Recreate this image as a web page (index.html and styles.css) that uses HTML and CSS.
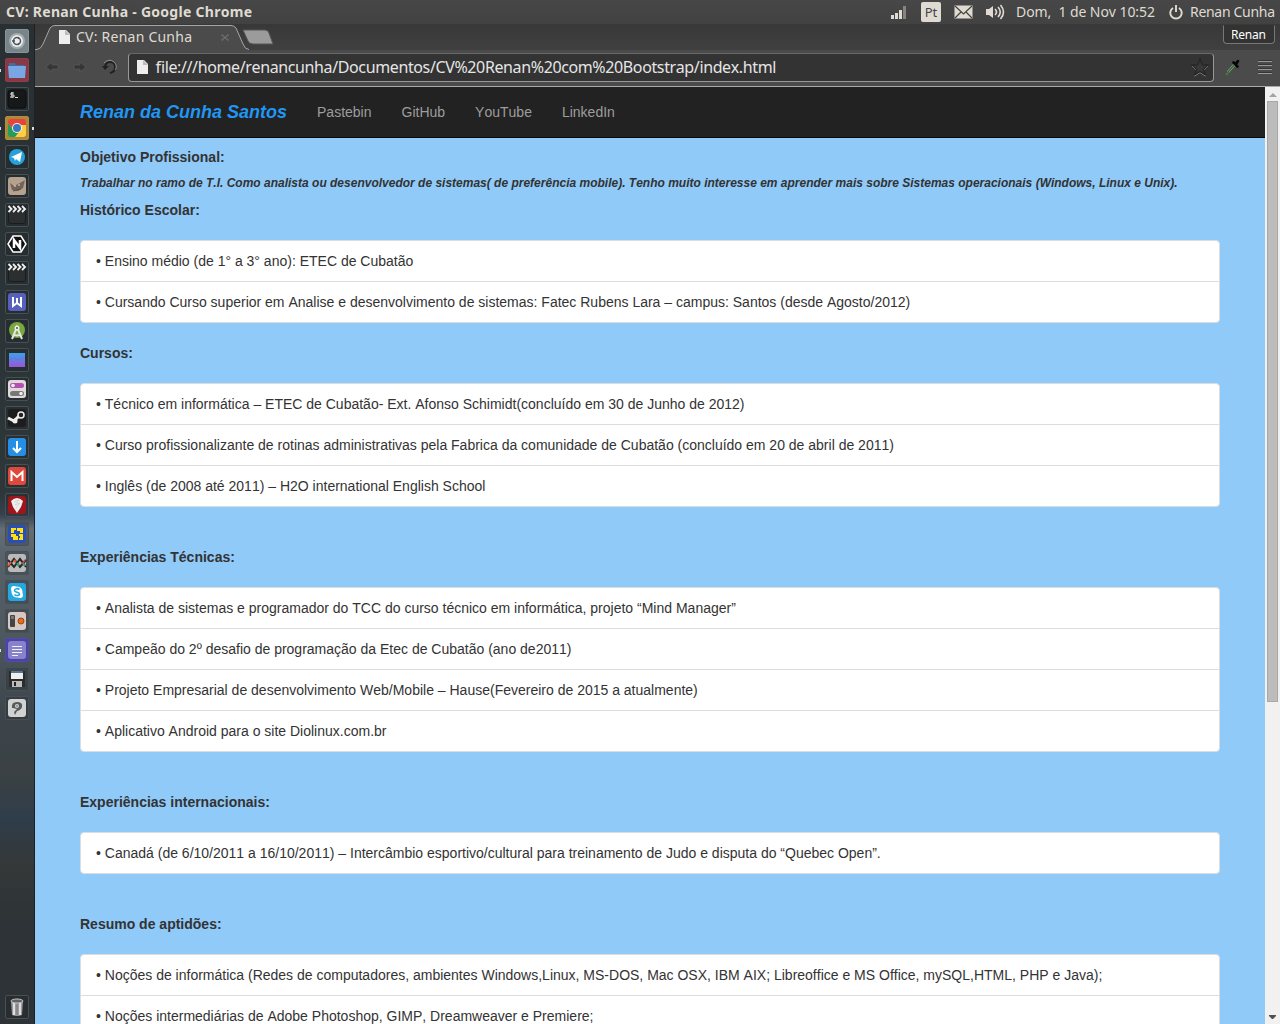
FILE: index.html
```html
<!DOCTYPE html>
<html lang="pt-BR">
<head>
<meta charset="utf-8">
<title>CV: Renan Cunha</title>
<link rel="stylesheet" href="styles.css">
</head>
<body>
<header class="panel">
  <span class="panel-title"><svg class="label" width="250" height="24"><text x="0" y="17" textLength="246" class="t-title">CV: Renan Cunha - Google Chrome</text></svg></span>
  <svg class="tray-signal" width="16" height="16" viewBox="0 0 16 16"><path d="M0 11h3v4H0zM4 9h3v6H4zM8 6h3v9H8z" fill="#dfdbd2"/><path d="M12 2h3v13h-3z" fill="#858481"/></svg>
  <span class="tray-lang">Pt</span>
  <svg class="tray-mail" width="19" height="14" viewBox="0 0 19 14"><path d="M.5.5h18v13H.5z" fill="#dfdbd2"/><path d="M1 1l8.500 8L18 1M1 13l6-6M18 13l-6-6" fill="none" stroke="#45433f" stroke-width="1.200"/></svg>
  <svg class="tray-sound" width="20" height="16" viewBox="0 0 20 16"><path d="M1 5h3l4-3v12l-4-3H1z" fill="#dfdbd2"/><path d="M10 5q3 3 0 6M13 3q4.500 5 0 10M15.500 1q6 7 0 14" fill="none" stroke="#dfdbd2" stroke-width="1.600"/></svg>
  <svg class="label tray-date" width="142" height="24"><text x="0" y="17" textLength="139" class="t-tray">Dom,&#160; 1 de Nov 10:52</text></svg>
  <svg class="tray-power" width="14" height="15" viewBox="0 0 14 15"><path d="M4 3a5.700 5.700 0 1 0 6 0M7 0v7" fill="none" stroke="#dfdbd2" stroke-width="1.900"/></svg>
  <svg class="label" width="90" height="24"><text x="0" y="17" textLength="85" class="t-tray">Renan Cunha</text></svg>
</header>
<div class="desktop">
  <nav class="launcher">
    <span class="tile tile-dash"><svg viewBox="0 0 24 24"><circle cx="12" cy="12" r="8" fill="#c5cdce" opacity=".55"/><circle cx="12" cy="12" r="6" fill="#eee"/><circle cx="12" cy="12" r="3.500" fill="none" stroke="#4a5558" stroke-width="1.500"/><path d="M7 12h3M13 8l1 2M13 16l1-2" stroke="#4a5558" stroke-width="1.500"/></svg></span>
    <span class="tile tile-files running"><svg viewBox="0 0 24 24"><path d="M4 5h6l1 2h8v4H4z" fill="#426b9e"/><path d="M3 8h18l-1 12H4z" fill="#79a7e3"/></svg></span>
    <span class="tile"><svg viewBox="0 0 24 24"><rect x="3" y="3" width="18" height="18" rx="3" fill="#171819" stroke="#0c0d0e"/><path d="M9 6H6v2h3v2H5M7 5v6M10 10.500h3" fill="none" stroke="#ddd"/></svg></span>
    <span class="tile tile-chrome running focused"><svg viewBox="0 0 24 24"><rect x="3" y="3" width="18" height="18" rx="3" fill="#ffce45"/><path d="M5 3h14q2 0 2 2v4H12l-4 5-5-7V5q0-2 2-2z" fill="#e9443a"/><path d="M3 7l6 8 5 1-4 5H5q-2 0-2-2z" fill="#239d58"/><circle cx="12" cy="12" r="5" fill="#f4f4ed"/><circle cx="12" cy="12" r="4" fill="#3979bc"/></svg></span>
    <span class="tile"><svg viewBox="0 0 24 24"><circle cx="12" cy="12" r="8" fill="#25a2dc"/><path d="M6 12l11-5-2 10-4-3-1 2-1-3z" fill="#fff"/></svg></span>
    <span class="tile"><svg viewBox="0 0 24 24"><rect x="3" y="3" width="18" height="18" rx="3" fill="#b4a18f"/><path d="M5 9l4 3 6-3 5-3-2 8-5 3-6-1z" fill="#716357"/><path d="M9 12h2m2-1h2" stroke="#ddd"/><path d="M8 17l8-2" stroke="#5b4f46"/></svg></span>
    <span class="tile"><svg viewBox="0 0 24 24"><rect x="3.500" y="6" width="17" height="14.500" rx="3" fill="#2c2f30" stroke="#191b1c"/><path d="M3 3h18v6H3z" fill="#1d1f20"/><path d="M3.500 3l3 3-3 3M8 3l3 3-3 3M12.500 3l3 3-3 3M17 3l3 3-3 3" fill="none" stroke="#eee" stroke-width="1.900"/></svg></span>
    <span class="tile"><svg viewBox="0 0 24 24"><path d="M8 4h8l5 8-5 8H8l-5-8z" fill="#111" stroke="#fff" stroke-width="1.500"/><path d="M9 16V8l6 8V8" fill="none" stroke="#fff" stroke-width="2.500"/></svg></span>
    <span class="tile"><svg viewBox="0 0 24 24"><rect x="3.500" y="6" width="17" height="14.500" rx="3" fill="#2c2f30" stroke="#191b1c"/><path d="M3 3h18v6H3z" fill="#1d1f20"/><path d="M3.500 3l3 3-3 3M8 3l3 3-3 3M12.500 3l3 3-3 3M17 3l3 3-3 3" fill="none" stroke="#eee" stroke-width="1.900"/></svg></span>
    <span class="tile"><svg viewBox="0 0 24 24"><rect x="3" y="3" width="18" height="18" rx="3" fill="#5660bd"/><path d="M8 7v9l4-3 4 3V7M12 8v5" fill="none" stroke="#fff" stroke-width="2"/></svg></span>
    <span class="tile"><svg viewBox="0 0 24 24"><circle cx="12" cy="11" r="8" fill="#79a83f"/><path d="M7 20l5-12 5 12M8 15q4 3 8 0" fill="none" stroke="#e4e6e2" stroke-width="2"/><circle cx="12" cy="9" r="2.500" fill="#eee"/><circle cx="12" cy="9" r="1" fill="#4b5e35"/></svg></span>
    <span class="tile"><svg viewBox="0 0 24 24"><defs><linearGradient id="wave" x2="0" y2="1"><stop stop-color="#3ca0ec"/><stop offset="1" stop-color="#9857d4"/></linearGradient></defs><path d="M4 5h16v14H4z" fill="url(#wave)"/><path d="M4 12l5-2 5 2 6-3" stroke="#6177dd" fill="none"/></svg></span>
    <span class="tile"><svg viewBox="0 0 24 24"><rect x="3" y="3" width="18" height="18" rx="3" fill="#dedbd9"/><rect x="5" y="6" width="14" height="5" rx="2.500" fill="#b550b4"/><circle cx="8" cy="8.500" r="1.800" fill="#eee"/><rect x="5" y="14" width="14" height="5" rx="2.500" fill="#777"/><circle cx="16" cy="16.500" r="1.800" fill="#eee"/></svg></span>
    <span class="tile"><svg viewBox="0 0 24 24"><rect x="3" y="3" width="18" height="18" rx="3" fill="#1d1d1e"/><path d="M3 12l6 3 6-6" fill="none" stroke="#eee" stroke-width="3"/><circle cx="16" cy="9" r="3" fill="#222" stroke="#eee" stroke-width="1.500"/><circle cx="10" cy="15" r="2.500" fill="#eee"/></svg></span>
    <span class="tile"><svg viewBox="0 0 24 24"><rect x="3" y="3" width="18" height="18" rx="3" fill="#268fe5"/><path d="M12 6v11M8 13l4 4 4-4" fill="none" stroke="#fff" stroke-width="2"/></svg></span>
    <span class="tile"><svg viewBox="0 0 24 24"><rect x="3" y="3" width="18" height="18" rx="3" fill="#de493e"/><path d="M6.500 17V8l5.500 5 5.500-5v9" fill="none" stroke="#fff" stroke-width="2"/></svg></span>
    <span class="tile"><svg viewBox="0 0 24 24"><rect x="3" y="3" width="18" height="18" rx="3" fill="#9e151c"/><path d="M6 8q6-6 12 0l-2 6-4 6-4-6z" fill="#f0eeee"/><path d="M9 9l5-2-4 5 5-2-4 5" fill="none" stroke="#ccc" stroke-width=".7"/></svg></span>
    <span class="tile"><svg viewBox="0 0 24 24"><rect x="3" y="3" width="18" height="18" rx="3" fill="#284dbd"/><path d="M6 6h5v2H9v3H6zM12 6h6v5h-3V9h-3zM6 12h5v2h2v4H8v-3H6zM14 12h4v6h-4v-2h1v-2h-1z" fill="#ffe30b"/></svg></span>
    <span class="tile"><svg viewBox="0 0 24 24"><rect x="3" y="3" width="18" height="18" rx="3" fill="#bababa"/><path d="M3 9l6 7 6-8 6 8" fill="none" stroke="#242728" stroke-width="2"/><path d="M3 16l6-8 6 8 6-7" fill="none" stroke="#242728" stroke-width="2"/><path d="M3 15l3-4M9 9l2 2" stroke="#ef5335" stroke-width="2"/><path d="M12 12l2 3M18 12l2 3" stroke="#32a56c" stroke-width="2"/><path d="M17 13l3-4" stroke="#d03d57" stroke-width="1.500"/></svg></span>
    <span class="tile"><svg viewBox="0 0 24 24"><rect x="3" y="3" width="18" height="18" rx="3" fill="#23a8e0"/><circle cx="12" cy="12" r="5.500" fill="#fff"/><circle cx="9" cy="9" r="3" fill="#fff"/><circle cx="15" cy="15" r="3" fill="#fff"/><path d="M14.500 9.500C13 8 9.500 8.500 9.500 10.500S14.500 12 14.500 14 11 16 9.500 14.500" fill="none" stroke="#23a8e0" stroke-width="1.600"/></svg></span>
    <span class="tile"><svg viewBox="0 0 24 24"><rect x="3" y="3" width="18" height="18" rx="3" fill="#d6c8c5"/><rect x="5" y="6" width="5" height="12" rx="1" fill="#444"/><path d="M6 7h3v3H6z" fill="#777"/><circle cx="16" cy="12" r="3" fill="#ed6d17" stroke="#924919"/></svg></span>
    <span class="tile tile-notes running"><svg viewBox="0 0 24 24"><rect x="3" y="3" width="18" height="18" rx="3" fill="#8782c9"/><path d="M7 8.500h10M7 11.500h10M7 14.500h10M7 17.500h6" stroke="#f0effa"/></svg></span>
    <span class="tile"><svg viewBox="0 0 24 24"><path d="M4 4h16v16H5l-1-1z" fill="#2b2b2c"/><path d="M6 4h12v8H6z" fill="#eee"/><path d="M6 4h12v2H6z" fill="#54778f"/><path d="M7 14h10v6H7z" fill="#bbb"/><path d="M9 15h2v4H9z" fill="#222"/></svg></span>
    <span class="tile"><svg viewBox="0 0 24 24"><rect x="3" y="3" width="18" height="18" rx="3" fill="#d2d2d1"/><path d="M7 12Q6 6 12 6t5 5q-1 3-5 4l-2 4-1-3 3-3-4-1z" fill="#555b5d"/><circle cx="12" cy="10" r="2" fill="#d2d2d1"/><circle cx="12" cy="10" r=".8" fill="#555b5d"/></svg></span>
    <span class="tile tile-trash"><svg viewBox="0 0 24 24"><path d="M6 6h12l-1 14q-5 2-10 0z" fill="#999b9d"/><path d="M9 7v13M15 7v13" stroke="#ddd" stroke-width="2"/><path d="M12 8v12" stroke="#777"/><ellipse cx="12" cy="6" rx="6" ry="2" fill="#606365" stroke="#c6c8c9"/></svg></span>
  </nav>
  <main class="window">
    <div class="tabstrip">
      <svg class="tab-shape" width="244" height="26" viewBox="0 0 244 26"><path d="M0 26Q6 25 8 20L15 4Q17 1.500 20 1.500H196Q199 1.500 201 4L208 20Q210 25 214 26z" fill="#4b4b4b"/><path d="M0 25.500H2Q6 25 8 20L15 4Q17 1.500 20 1.500H196Q199 1.500 201 4L208 20Q210 25.500 214 25.500" fill="none" stroke="#a6a6a6"/><path d="M24 6h7l4 4v10H24z" fill="#eee"/><path d="M30 6v5h5" fill="#bbb"/><path d="M187 10l6 7M193 10l-6 7M186 11l8 5M194 11l-8 5" stroke="#777" stroke-width=".7"/><path d="M208 6H230q3 0 4 3l4 11H218q-4 0-5-3z" fill="#9b9b9b" stroke="#555"/><text x="41" y="18" textLength="116" class="t-tab">CV: Renan Cunha</text></svg>
      <span class="profile"><svg class="label" width="36" height="17"><text x="-1" y="12" textLength="35" class="t-profile">Renan</text></svg></span>
    </div>
    <div class="toolbar">
      <svg class="nav-icons" width="72" height="20" viewBox="0 0 72 20"><path d="M-1 10l6-5v3h6v4H5v3zM39 10l-6-5v3h-6v4h6v3z" fill="#363636" stroke="#606060" stroke-width=".6"/><path d="M58 11q0-6 5-6t5 5-5 6" fill="none" stroke="#202020" stroke-width="2"/><path d="M55 9h7l-4 4z" fill="#202020"/><path d="M57 6q5-5 10-1 4 4 1 8" fill="none" stroke="#aaa" stroke-width=".7"/></svg>
      <div class="address">
        <svg width="13" height="16" viewBox="0 0 13 16"><path d="M1 1h7l4 4v10H1z" fill="#eee"/><path d="M7 1v5h5" fill="#bbb"/></svg>
        <svg class="label url" width="640" height="26"><text x="0" y="19" textLength="621" class="t-url">file:///home/renancunha/Documentos/CV%20Renan%20com%20Bootstrap/index.html</text></svg>
        <svg class="star" width="20" height="20" viewBox="0 0 20 20"><path d="M10 2l2.300 6H18l-4.500 4.300 2 5.700-5.500-3.500L4.500 18l2-5.700L2 8h5.700z" transform="translate(0 1)" fill="none" stroke="#999" stroke-width=".9"/><path d="M10 2l2.300 6H18l-4.500 4.300 2 5.700-5.500-3.500L4.500 18l2-5.700L2 8h5.700z" fill="#383838" stroke="#222" stroke-width="1.100"/></svg>
      </div>
      <svg class="picker" width="18" height="20" viewBox="0 0 18 20"><path d="M4 15l7-8" stroke="#9aad9b" stroke-width="2.500"/><path d="M4 15l6-7" stroke="#286b30" stroke-width="1.300"/><path d="M9.500 5.500l4 4M12 7l2-3" stroke="#050505" stroke-width="2.600" stroke-linecap="round"/><circle cx="3" cy="17" r="1.300" fill="#34853c"/></svg>
      <svg class="menu" width="16" height="18" viewBox="0 0 16 18"><path d="M1 2.500h14M1 6.500h14M1 10.500h14M1 14.500h14" stroke="#353535"/><path d="M1 3.500h14M1 7.500h14M1 11.500h14M1 15.500h14" stroke="#999"/></svg>
    </div>
    <div class="viewport">
      <div class="page">
        <nav class="navbar"><a class="brand">Renan da Cunha Santos</a><a>Pastebin</a><a>GitHub</a><a>YouTube</a><a>LinkedIn</a></nav>
        <div class="container">
          <h2>Objetivo Profissional:</h2>
          <p class="goal">Trabalhar no ramo de T.I. Como analista ou desenvolvedor de sistemas( de preferência mobile). Tenho muito interesse em aprender mais sobre Sistemas operacionais (Windows, Linux e Unix).</p>
          <h2>Histórico Escolar:</h2>
          <ul class="tight"><li>• Ensino médio (de 1° a 3° ano): ETEC de Cubatão</li><li>• Cursando Curso superior em Analise e desenvolvimento de sistemas: Fatec Rubens Lara – campus: Santos (desde Agosto/2012)</li></ul>
          <h2>Cursos:</h2>
          <ul><li>• Técnico em informática – ETEC de Cubatão- Ext. Afonso Schimidt(concluído em 30 de Junho de 2012)</li><li>• Curso profissionalizante de rotinas administrativas pela Fabrica da comunidade de Cubatão (concluído em 20 de abril de 2011)</li><li>• Inglês (de 2008 até 2011) – H2O international English School</li></ul>
          <h2>Experiências Técnicas:</h2>
          <ul><li>• Analista de sistemas e programador do TCC do curso técnico em informática, projeto “Mind Manager”</li><li>• Campeão do 2º desafio de programação da Etec de Cubatão (ano de2011)</li><li>• Projeto Empresarial de desenvolvimento Web/Mobile – Hause(Fevereiro de 2015 a atualmente)</li><li>• Aplicativo Android para o site Diolinux.com.br</li></ul>
          <h2>Experiências internacionais:</h2>
          <ul><li>• Canadá (de 6/10/2011 a 16/10/2011) – Intercâmbio esportivo/cultural para treinamento de Judo e disputa do “Quebec Open”.</li></ul>
          <h2>Resumo de aptidões:</h2>
          <ul><li>• Noções de informática (Redes de computadores, ambientes Windows,Linux, MS-DOS, Mac OSX, IBM AIX; Libreoffice e MS Office, mySQL,HTML, PHP e Java);</li><li>• Noções intermediárias de Adobe Photoshop, GIMP, Dreamweaver e Premiere;</li></ul>
        </div>
      </div>
      <div class="scrollbar"><svg width="15" height="14"><path d="M4 10l4-4 4 4z" fill="#a3a3a3"/></svg><span class="thumb"></span><svg class="down" width="15" height="14"><path d="M4 5h7v1l-3 3h-1l-3-3z" fill="#505050"/></svg></div>
    </div>
  </main>
</div>
</body>
</html>
```
FILE: styles.css
```css
* { box-sizing: border-box; }
body { margin: 0; width: 1280px; height: 1024px; overflow: hidden; font: 14px/20px "Liberation Sans", Arial, sans-serif; font-kerning: none; color: #333; }
svg { display: block; flex: none; }
text { font-family: "Noto Sans", sans-serif; fill: #dfdbd2; }
.t-title { font-size: 14px; font-weight: 700; }
.t-tray, .t-tab { font-size: 14px; }
.t-profile { font-size: 12px; fill: #fff; }
.t-url { font-size: 16px; fill: #e5e5e5; }
.panel { height: 24px; display: flex; align-items: center; padding-left: 6px; background: linear-gradient(#474747, #424242); }
.panel-title { width: 885px; }
.tray-lang { width: 20px; height: 20px; margin-left: 14px; border-radius: 2px; background: #dfdbd2; color: #444; font: 13px/20px "Noto Sans", sans-serif; text-align: center; }
.tray-mail { margin-left: 13px; }
.tray-sound { margin-left: 12px; }
.tray-date { margin-left: 11px; }
.tray-power { margin: 0 7px 0 11px; }
.desktop { display: flex; height: 1000px; }
.launcher { width: 35px; flex: none; display: flex; flex-direction: column; gap: 5px; padding: 5px 0 5px 5px; border-right: 1px solid #231f1e; background: linear-gradient(#283033 0, #2d3638 470px, #34404e 490px, #656e76 505px, #56616a 535px, #4c565d 620px, #3c454b 690px, #3b4144 750px, #2f3d4a 795px, #343839 840px, #2d3336 900px, #2d3336); }
.tile { position: relative; width: 24px; height: 24px; flex: none; border: 1px solid #485053; border-radius: 2px; background: rgba(20, 26, 28, .2); }
.tile svg { width: 24px; height: 24px; margin: -1px; }
.tile-dash { background: #788489; border-color: #899498; }
.tile-files { background: #873a46; border-color: #913c48; }
.tile-chrome { background: #ac8839; border-color: #b38e42; }
.tile-notes { background: #4c43a6; border-color: #5149ab; }
.tile-trash { margin-top: auto; }
.running::before, .focused::after { content: ""; position: absolute; top: 10px; width: 2px; height: 3px; background: #ddd; }
.running::before { left: -7px; }
.focused::after { right: -6px; }
.window { width: 1245px; display: flex; flex-direction: column; }
.tabstrip { height: 26px; display: flex; justify-content: space-between; padding-right: 5px; background: linear-gradient(#383838, #404040); }
.profile { width: 52px; height: 19px; margin-top: 1px; padding: 1px 0 0 8px; border: 1px solid #777; border-top-color: #333; border-radius: 0 0 4px 4px; background: #333; }
.toolbar { height: 37px; display: flex; align-items: center; padding: 0 7px 2px 12px; background: #4b4b4b; border-bottom: 1px solid #aaa; }
.nav-icons { overflow: visible; }
.address { width: 1086px; height: 29px; display: flex; align-items: center; margin-left: 9px; padding: 0 3px 0 7px; border: 1px solid #999; border-top-color: #686868; border-radius: 4px; background: #333; }
.url { margin-left: 6px; }
.star { margin-left: auto; }
.picker { margin-left: 10px; }
.menu { margin-left: auto; }
.viewport { height: 937px; display: flex; }
.page { width: 1230px; background: #90caf9; overflow: hidden; }
.navbar { height: 51px; display: flex; gap: 30px; padding: 15px 45px; background: #222; border-bottom: 1px solid #080808; color: #9d9d9d; }
.brand { color: #2196f3; font-size: 18px; font-weight: 700; font-style: italic; }
.container { padding: 9px 45px 0; }
h2 { margin: 0; font-size: 14px; line-height: 20px; }
.goal { margin: 6px 0 7px; font-size: 12px; font-weight: 700; font-style: italic; white-space: nowrap; }
ul { list-style: none; margin: 20px 0 40px; padding: 0; background: #fff; border: 1px solid #ddd; border-radius: 4px; }
ul.tight { margin-bottom: 20px; }
li { height: 41px; padding: 10px 15px; border-bottom: 1px solid #ddd; white-space: nowrap; }
li:last-child { height: 40px; border-bottom: 0; }
.scrollbar { width: 15px; display: flex; flex-direction: column; background: #f1f1f1; }
.thumb { width: 11px; height: 601px; margin-left: 2px; background: #bcbcbc; border: 1px solid #a8a8a8; }
.down { margin-top: auto; }
```
